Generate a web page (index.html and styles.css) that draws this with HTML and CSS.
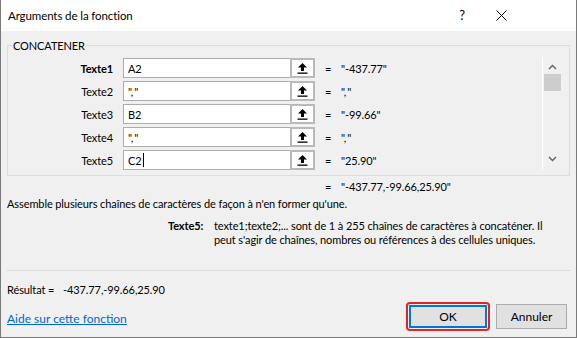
FILE: index.html
```html
<!DOCTYPE html>
<html lang="fr">
<head>
    <meta charset="UTF-8">
    <title>Arguments de la fonction</title>
    <link rel="stylesheet" href="styles.css">
</head>
<body>
    <div class="dialog">
        <div class="titlebar">
            <span class="title">Arguments de la fonction</span>
            <span class="help">?</span>
            <span class="close">
                <svg width="11" height="11" viewBox="0 0 11 11">
                    <path d="M0.5 0.5 L10.5 10.5 M10.5 0.5 L0.5 10.5" stroke="#000" stroke-width="1" fill="none"/>
                </svg>
            </span>
        </div>

        <div class="content">
            <fieldset class="group">
                <legend>CONCATENER</legend>
                <div class="group-inner">
                    <div class="args">
                        <div class="arg-row">
                            <label class="arg-name active">Texte1</label>
                            <div class="arg-input">A2</div>
                            <button class="ref-btn"><svg width="11" height="12" viewBox="0 0 11 12"><path d="M5.5 1 L10 5.5 L7 5.5 L7 9 L4 9 L4 5.5 L1 5.5 Z" fill="#000"/><rect x="0.5" y="10.5" width="10" height="1.3" fill="#000"/></svg></button>
                            <span class="eq">=</span>
                            <span class="arg-value">"-437.77"</span>
                        </div>
                        <div class="arg-row">
                            <label class="arg-name">Texte2</label>
                            <div class="arg-input">",<span class="q">"</span></div>
                            <button class="ref-btn"><svg width="11" height="12" viewBox="0 0 11 12"><path d="M5.5 1 L10 5.5 L7 5.5 L7 9 L4 9 L4 5.5 L1 5.5 Z" fill="#000"/><rect x="0.5" y="10.5" width="10" height="1.3" fill="#000"/></svg></button>
                            <span class="eq">=</span>
                            <span class="arg-value">",<span class="q">"</span></span>
                        </div>
                        <div class="arg-row">
                            <label class="arg-name">Texte3</label>
                            <div class="arg-input">B2</div>
                            <button class="ref-btn"><svg width="11" height="12" viewBox="0 0 11 12"><path d="M5.5 1 L10 5.5 L7 5.5 L7 9 L4 9 L4 5.5 L1 5.5 Z" fill="#000"/><rect x="0.5" y="10.5" width="10" height="1.3" fill="#000"/></svg></button>
                            <span class="eq">=</span>
                            <span class="arg-value">"-99.66"</span>
                        </div>
                        <div class="arg-row">
                            <label class="arg-name">Texte4</label>
                            <div class="arg-input">",<span class="q">"</span></div>
                            <button class="ref-btn"><svg width="11" height="12" viewBox="0 0 11 12"><path d="M5.5 1 L10 5.5 L7 5.5 L7 9 L4 9 L4 5.5 L1 5.5 Z" fill="#000"/><rect x="0.5" y="10.5" width="10" height="1.3" fill="#000"/></svg></button>
                            <span class="eq">=</span>
                            <span class="arg-value">",<span class="q">"</span></span>
                        </div>
                        <div class="arg-row">
                            <label class="arg-name">Texte5</label>
                            <div class="arg-input">C2<span class="caret"></span></div>
                            <button class="ref-btn"><svg width="11" height="12" viewBox="0 0 11 12"><path d="M5.5 1 L10 5.5 L7 5.5 L7 9 L4 9 L4 5.5 L1 5.5 Z" fill="#000"/><rect x="0.5" y="10.5" width="10" height="1.3" fill="#000"/></svg></button>
                            <span class="eq">=</span>
                            <span class="arg-value">"25.90"</span>
                        </div>
                    </div>

                    <div class="scrollbar">
                        <svg class="chev" width="9" height="6" viewBox="0 0 9 6"><path d="M1 5 L4.5 1.5 L8 5" stroke="#606060" stroke-width="1.4" fill="none"/></svg>
                        <div class="thumb"></div>
                        <div class="track"></div>
                        <svg class="chev chev-down" width="9" height="6" viewBox="0 0 9 6"><path d="M1 1 L4.5 4.5 L8 1" stroke="#606060" stroke-width="1.4" fill="none"/></svg>
                    </div>
                </div>
            </fieldset>

            <div class="total">
                <span class="eq">=</span>
                <span>"-437.77,-99.66,25.90"</span>
            </div>

            <p class="desc">Assemble plusieurs chaînes de caractères de façon à n'en former qu'une.</p>

            <div class="arg-help">
                <strong>Texte5:</strong>
                <span class="arg-help-text">texte1;texte2;... sont de 1 à 255 chaînes de caractères à concaténer. Il peut s'agir de chaînes, nombres ou références à des cellules uniques.</span>
            </div>

            <hr class="sep">

            <div class="result">
                <span class="result-label">Résultat =</span>
                <span>-437.77,-99.66,25.90</span>
            </div>

            <div class="footer">
                <a href="#" class="help-link">Aide sur cette fonction</a>
                <div class="buttons">
                    <div class="focus-ring"><button class="btn btn-default">OK</button></div>
                    <button class="btn">Annuler</button>
                </div>
            </div>
        </div>
    </div>
</body>
</html>
```

FILE: styles.css
```css
html, body {
    margin: 0;
    padding: 0;
    background: #ffffff;
}

body {
    font-family: Lato, "Liberation Sans", Arial, sans-serif;
    font-size: 11px;
    letter-spacing: -0.1px;
    color: #000;
}

.dialog {
    width: 577px;
    height: 338px;
    box-sizing: border-box;
    border: 1px solid #7a7a7a;
    border-top: none;
    background-color: #f0f0f0;
    display: flex;
    flex-direction: column;
    overflow: hidden;
}

.titlebar {
    flex-shrink: 0;
    height: 31px;
    background: #ffffff;
    display: flex;
    align-items: center;
    padding-left: 7px;
}

.title {
    flex: 1;
    font-size: 11.5px;
    letter-spacing: -0.1px;
    padding-bottom: 1px;
}

.help {
    font-size: 13px;
    width: 20px;
    text-align: center;
    margin-right: 6px;
    padding-bottom: 1px;
}

.close {
    width: 46px;
    display: flex;
    justify-content: center;
    margin-right: 52px;
}

.content {
    padding: 0 6px;
    flex: 1;
    display: flex;
    flex-direction: column;
}

/* --- groupe d'arguments --- */

.group {
    flex-shrink: 0;
    margin: 7px 0 0 0;
    padding: 0 8px 0 0;
    border: 1px solid #dcdcdc;
    height: 138px;
    box-sizing: border-box;
    min-width: 0;
}

.group legend {
    padding: 0 1px;
    margin-left: 4px;
    line-height: 15px;
}

.group-inner {
    display: flex;
    padding-top: 5px;
}

.args {
    flex: 1;
    display: flex;
    flex-direction: column;
    gap: 3px;
}

.arg-row {
    display: flex;
    align-items: center;
    height: 20px;
}

.arg-name {
    width: 115px;
    text-align: right;
    padding-right: 10px;
    box-sizing: border-box;
}

.arg-name.active {
    font-weight: bold;
}

.arg-input {
    width: 167px;
    height: 20px;
    box-sizing: border-box;
    border: 1px solid #adadad;
    border-right: none;
    background: #ffffff;
    padding-left: 4px;
    display: flex;
    align-items: center;
}

.q {
    margin-left: 1px;
}

.caret {
    display: inline-block;
    width: 1px;
    height: 14px;
    background: #000;
    margin-left: 1px;
}

.ref-btn {
    width: 25px;
    height: 20px;
    box-sizing: border-box;
    border: 2px solid #b9b9b9;
    background: #ffffff;
    padding: 0;
    display: flex;
    align-items: center;
    justify-content: center;
}

.eq {
    margin-left: 10px;
    width: 16px;
}

.scrollbar {
    width: 18px;
    height: 113px;
    border-left: 1px solid #ffffff;
    display: flex;
    flex-direction: column;
    align-items: center;
    margin-top: -1px;
}

.scrollbar .chev {
    margin-top: 7px;
}

.thumb {
    width: 17px;
    height: 17px;
    background: #cdcdcd;
    margin-top: 4px;
}

.track {
    flex: 1;
}

.scrollbar .chev-down {
    margin: 0 0 8px 0;
}

/* --- résultat de la formule --- */

.total {
    margin-top: 2px;
    padding-left: 308px;
    display: flex;
    height: 16px;
    align-items: center;
}

.desc {
    margin: 2px 0 0 0;
    line-height: 16px;
}

.arg-help {
    display: flex;
    margin-top: 7px;
    padding-left: 161px;
    line-height: 14px;
}

.arg-help strong {
    width: 46px;
    flex-shrink: 0;
}

.arg-help-text {
    width: 342px;
}

.sep {
    flex-shrink: 0;
    margin: 23px 0 0 0;
    border: none;
    border-top: 1px solid #dadada;
}

.result {
    margin-top: 11px;
    line-height: 16px;
    display: flex;
}

.result-label {
    width: 56px;
}

.footer {
    display: flex;
    align-items: center;
    justify-content: space-between;
    margin-top: 4px;
}

.help-link {
    color: #0066cc;
    font-size: 12px;
    letter-spacing: 0;
    padding-top: 4px;
}

.buttons {
    display: flex;
    align-items: center;
    gap: 6px;
    margin-right: 3px;
}

.focus-ring {
    border: 2px solid #e0242c;
    border-radius: 4px;
    padding: 1px;
    display: flex;
}

.btn {
    font-family: inherit;
    font-size: 12px;
    width: 71px;
    height: 25px;
    border: 1px solid #adadad;
    background: #e1e1e1;
    color: #000;
    padding: 0;
}

.btn-default {
    width: 78px;
    height: 23px;
    border: 2px solid #0078d7;
}
```
